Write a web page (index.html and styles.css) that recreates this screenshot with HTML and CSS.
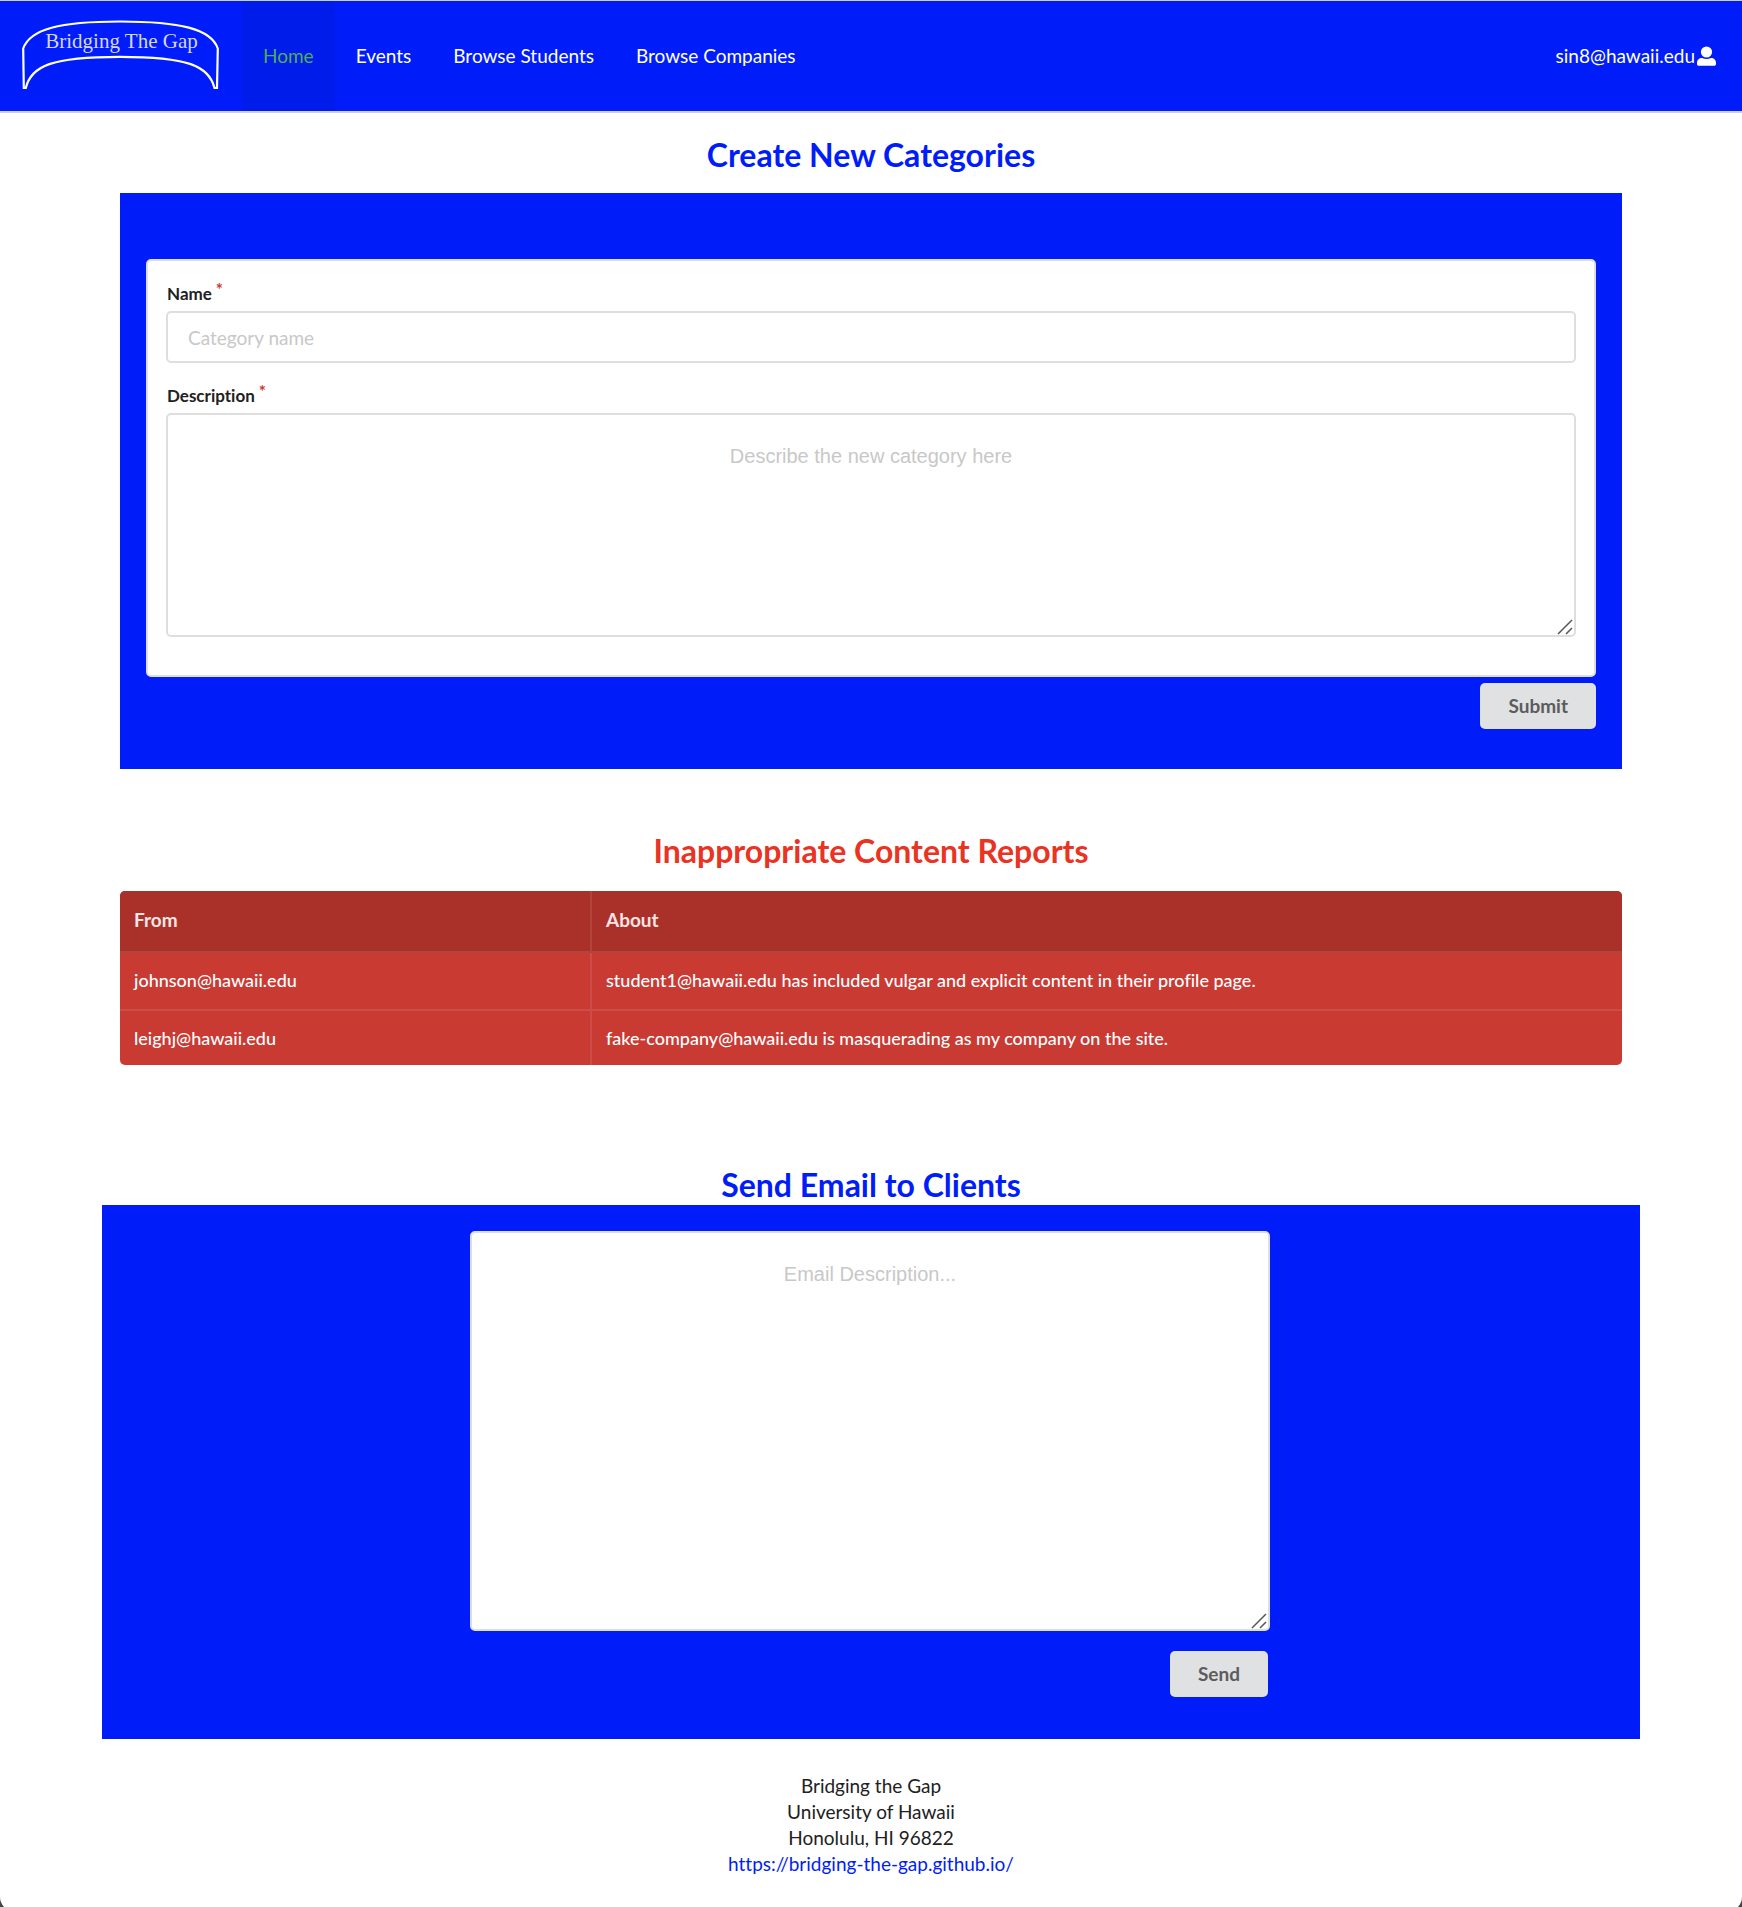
FILE: index.html
```html
<!DOCTYPE html>
<html lang="en">
<head>
<meta charset="utf-8">
<meta name="viewport" content="width=device-width, initial-scale=1">
<title>Bridging The Gap</title>
<link rel="stylesheet" href="styles.css">
</head>
<body>
<header class="navbar">
  <a class="logo" href="#" aria-label="Bridging The Gap">
    <svg width="198" height="72" viewBox="0 0 198 72" fill="none" stroke="#fff" stroke-width="2.2">
      <path d="M1.200 31.500C8 12 38 4.500 98 4.500S189 12 195.800 31.500L195 71H192.500C187 49 166 39.800 98 39.800S9 49 3.800 71H1.800Z"/>
      <text class="logo-text" x="99.500" y="31" text-anchor="middle">Bridging The Gap</text>
    </svg>
  </a>
  <nav class="menu">
    <a class="item active" href="#">Home</a>
    <a class="item" href="#">Events</a>
    <a class="item" href="#">Browse Students</a>
    <a class="item" href="#">Browse Companies</a>
  </nav>
  <a class="account" href="#">sin8@hawaii.edu<svg width="19" height="20" viewBox="0 0 19 20" fill="#fff"><circle cx="9.500" cy="6" r="5.600"/><path d="M5 12C2 12 0 14 0 17v1c0 1 .8 1.800 1.800 1.800h15.400c1 0 1.800-.8 1.800-1.800v-1c0-3-2-5-5-5-1.500.8-3 1.100-4.500 1.100S6.500 12.800 5 12Z"/></svg></a>
</header>
<main>
  <section class="container categories">
    <h2 class="title">Create New Categories</h2>
    <form class="panel category-panel">
      <div class="segment">
        <label class="label" for="name">Name</label>
        <input class="input" id="name" type="text" placeholder="Category name" required>
        <label class="label" for="description">Description</label>
        <div class="area">
          <textarea class="textarea" id="description" placeholder="Describe the new category here" required></textarea>
          <svg class="grip" width="16" height="16" viewBox="0 0 16 16" stroke="#555" stroke-width="1.500"><path d="M1 15L15 1M9 15L15 9"/></svg>
        </div>
      </div>
      <button class="button" type="submit">Submit</button>
    </form>
  </section>
  <section class="container reports">
    <h2 class="title title-red">Inappropriate Content Reports</h2>
    <table class="table">
      <thead><tr><th class="from">From</th><th>About</th></tr></thead>
      <tbody>
        <tr><td>johnson@hawaii.edu</td><td>student1@hawaii.edu has included vulgar and explicit content in their profile page.</td></tr>
        <tr><td>leighj@hawaii.edu</td><td>fake-company@hawaii.edu is masquerading as my company on the site.</td></tr>
      </tbody>
    </table>
  </section>
  <section class="container email">
    <h2 class="title">Send Email to Clients</h2>
    <form class="panel email-panel">
      <div class="email-form">
        <div class="area">
          <textarea class="textarea textarea-tall" aria-label="Email description" placeholder="Email Description..."></textarea>
          <svg class="grip" width="16" height="16" viewBox="0 0 16 16" stroke="#555" stroke-width="1.500"><path d="M1 15L15 1M9 15L15 9"/></svg>
        </div>
        <button class="button" type="submit">Send</button>
      </div>
    </form>
  </section>
</main>
<footer class="footer">
  <div>Bridging the Gap</div>
  <div>University of Hawaii</div>
  <div>Honolulu, HI 96822</div>
  <a class="footer-link" href="#">https://bridging-the-gap.github.io/</a>
</footer>
</body>
</html>
```
FILE: styles.css
```css
* { box-sizing: border-box; }
html { background: #444; }
body {
  margin: 0;
  min-height: 100vh;
  background: #fff;
  border-radius: 0 0 14px 14px;
  color: #212121;
  font: 19px/26px Lato, "Liberation Sans", sans-serif;
  font-variant-ligatures: none;
}
a { color: inherit; text-decoration: none; }

.navbar {
  display: flex;
  align-items: stretch;
  min-height: 113px;
  background: #001df9;
  border-top: 1px solid #ccccd4;
  border-bottom: 2px solid #d0d0d4;
  color: #fff;
}
.logo { display: flex; align-items: flex-start; padding: 16px 22px; }
.logo-text {
  fill: #d6d6ff;
  stroke: none;
  font: 21px "Liberation Serif", serif;
}
.menu { display: flex; }
.item { display: flex; align-items: center; padding: 0 21px; }
.item.active { background: #001ceb; color: #4fae5a; }
.account {
  display: flex;
  align-items: center;
  gap: 2px;
  margin-left: auto;
  padding-right: 26px;
}

.container { margin: 0 120px; }
.title {
  margin: 0;
  color: #001df9;
  font-size: 32px;
  line-height: 40px;
  font-weight: 700;
  text-align: center;
}
.title-red { color: #e93323; }
.panel { background: #001df9; }

.categories { padding-top: 22px; }
.category-panel {
  display: flex;
  flex-direction: column;
  align-items: flex-end;
  gap: 6px;
  margin-top: 18px;
  padding: 66px 26px 40px;
}
.segment {
  width: 100%;
  padding: 20px 18px 38px;
  background: #fff;
  border: 2px solid #dededf;
  border-radius: 5px;
}
.label {
  display: block;
  padding: 1px 1px 5px;
  font-size: 17px;
  line-height: 24px;
  font-weight: 700;
}
.label::after {
  content: "*";
  margin-left: 4px;
  color: #cb3a33;
  vertical-align: top;
  line-height: 16px;
}
.input {
  display: block;
  width: 100%;
  height: 52px;
  margin-bottom: 20px;
  padding: 0 20px;
  border: 2px solid #dededf;
  border-radius: 5px;
  font: inherit;
}
.input::placeholder, .textarea::placeholder { color: #c8c8c8; opacity: 1; }
.area { position: relative; width: 100%; }
.textarea {
  display: block;
  width: 100%;
  height: 224px;
  padding: 28px 20px;
  border: 2px solid #dededf;
  border-radius: 5px;
  background: #fff;
  font: 20px/26px "Liberation Sans", sans-serif;
  text-align: center;
  resize: none;
}
.textarea-tall { height: 400px; }
.grip { position: absolute; right: 3px; bottom: 2px; }
.button {
  height: 46px;
  padding: 0 28px;
  border: 0;
  border-radius: 5px;
  background: #e0e1e2;
  color: #5c5c5d;
  font: 700 19px/26px Lato, sans-serif;
}

.reports { padding-top: 62px; }
.table {
  width: 100%;
  margin-top: 20px;
  border-collapse: separate;
  border-spacing: 0;
  border-radius: 5px;
  overflow: hidden;
  background: #c93a33;
  color: #fff;
}
.table th, .table td {
  height: 58px;
  padding: 0 14px 2px;
  text-align: left;
  border-bottom: 2px solid #cd4c45;
}
.table td { font-size: 18px; font-weight: 500; }
.table th {
  height: 62px;
  background: #aa312a;
  border-color: #af453f;
  color: #f7e4e3;
}
.table tr > :first-child { border-right: 2px solid #cd4c45; }
.table th:first-child { border-right-color: #b2433d; }
.table tbody tr:last-child td { height: 54px; padding-bottom: 0; border-bottom: 0; }
.from { width: 472px; }

.email { margin: 0 102px; padding-top: 100px; }
.email-panel {
  display: flex;
  justify-content: center;
  padding: 26px 28px 42px 26px;
}
.email-form {
  display: flex;
  flex-direction: column;
  align-items: flex-end;
  gap: 20px;
  width: 800px;
}
.email-form .button { margin-right: 2px; }

.footer { padding: 34px 20px; text-align: center; }
.footer-link { color: #001df9; }
```
